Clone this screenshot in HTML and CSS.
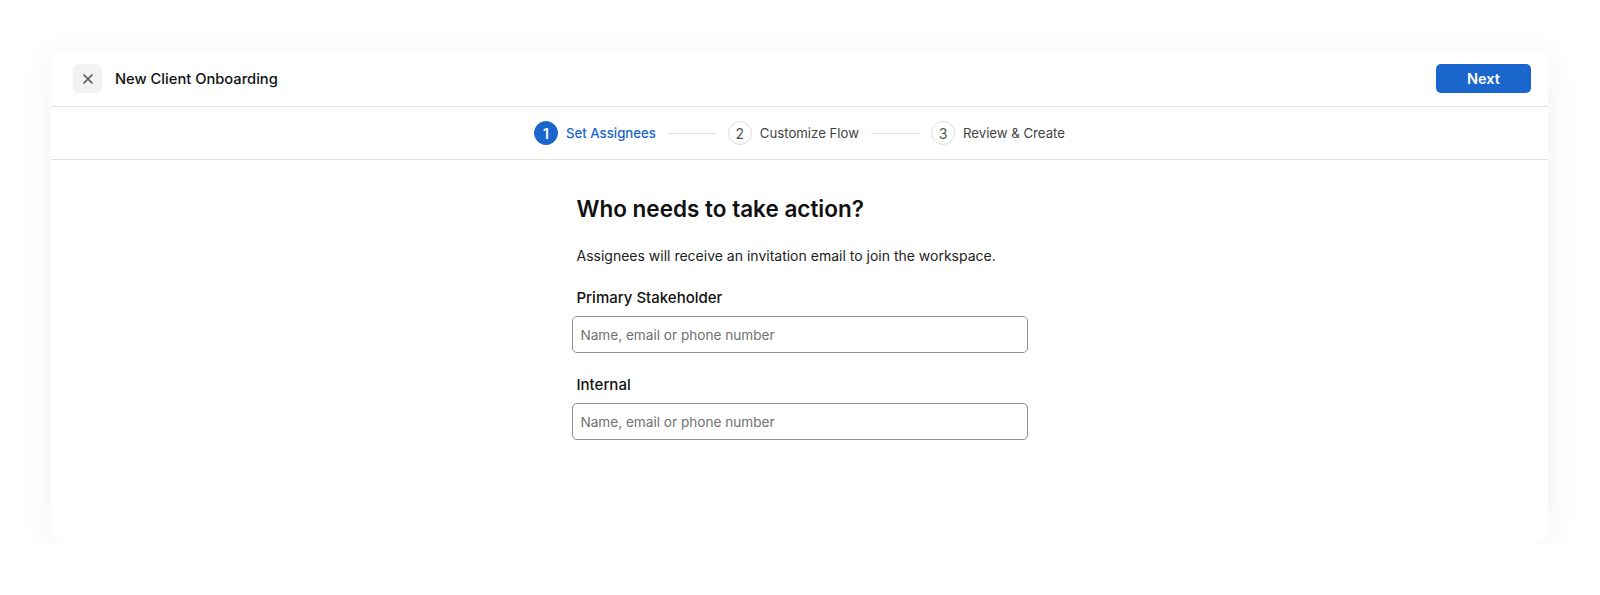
FILE: index.html
```html
<!DOCTYPE html>
<html lang="en">
<head>
    <meta charset="UTF-8">
    <meta name="viewport" content="width=device-width, initial-scale=1.0">
    <title>New Client Onboarding</title>
    <link rel="stylesheet" href="styles.css">
</head>
<body>
    <div class="card">
        <header class="topbar">
            <div class="topbar-left">
                <button class="close-btn" aria-label="Close">
                    <svg width="12" height="12" viewBox="0 0 12 12">
                        <path d="M2 2 L10 10 M10 2 L2 10" stroke="#555" stroke-width="1.6" stroke-linecap="round"/>
                    </svg>
                </button>
                <span class="title">New Client Onboarding</span>
            </div>
            <button class="next-btn">Next</button>
        </header>

        <nav class="stepper">
            <div class="step active">
                <span class="step-num">1</span>
                <span class="step-label">Set Assignees</span>
            </div>
            <span class="step-line"></span>
            <div class="step">
                <span class="step-num">2</span>
                <span class="step-label">Customize Flow</span>
            </div>
            <span class="step-line"></span>
            <div class="step">
                <span class="step-num">3</span>
                <span class="step-label">Review &amp; Create</span>
            </div>
        </nav>

        <main class="content">
            <h1>Who needs to take action?</h1>
            <p class="intro">Assignees will receive an invitation email to join the workspace.</p>

            <div class="field">
                <label for="primary">Primary Stakeholder</label>
                <input type="text" id="primary" placeholder="Name, email or phone number">
            </div>

            <div class="field">
                <label for="internal">Internal</label>
                <input type="text" id="internal" placeholder="Name, email or phone number">
            </div>
        </main>
    </div>
</body>
</html>
```

FILE: styles.css
```css
body {
    font-family: Inter, 'Liberation Sans', sans-serif;
    margin: 0;
    padding: 51px 52px 0 51px;
    background: #fff;
    color: #111;
}
.card {
    height: 493px;
    background: #fff;
    border-radius: 14px;
    box-shadow: 0 4px 36px rgba(0, 0, 0, 0.06);
    display: flex;
    flex-direction: column;
}
.topbar {
    height: 55px;
    display: flex;
    align-items: center;
    justify-content: space-between;
    padding: 0 17px 0 22px;
    border-bottom: 1px solid #e2e2e2;
}
.topbar-left {
    display: flex;
    align-items: center;
    gap: 13px;
}
.close-btn {
    width: 29px;
    height: 29px;
    border: none;
    border-radius: 6px;
    background: #f2f2f2;
    display: flex;
    align-items: center;
    justify-content: center;
    padding: 0;
}
.title {
    font-size: 14.7px;
    font-weight: 500;
    color: #111;
}
.next-btn {
    width: 95px;
    height: 29px;
    border: none;
    border-radius: 5px;
    background: #1a66cc;
    color: #fff;
    font-family: inherit;
    font-size: 14.5px;
    font-weight: 600;
}
.stepper {
    height: 52px;
    display: flex;
    align-items: center;
    justify-content: center;
    gap: 12px;
    border-bottom: 1px solid #e2e2e2;
}
.step {
    display: flex;
    align-items: center;
    gap: 8px;
    font-size: 13.2px;
    color: #444;
}
.step-num {
    width: 22px;
    height: 22px;
    border: 1px solid #dcdcdc;
    border-radius: 50%;
    display: flex;
    align-items: center;
    justify-content: center;
    font-size: 14px;
    color: #555;
}
.step.active .step-num {
    background: #1a66cc;
    border-color: #1a66cc;
    color: #fff;
    font-weight: 600;
}
.step.active .step-label {
    color: #1a66cc;
    font-weight: 500;
}
.step-line {
    width: 48px;
    height: 1px;
    background: #dedede;
}
.content {
    width: 456px;
    margin: 0 auto;
    padding-top: 35px;
}
h1 {
    font-size: 22.5px;
    line-height: 27px;
    font-weight: 600;
    margin: 0 0 24px;
    padding-left: 5px;
    color: #111;
}
.intro {
    font-size: 14px;
    line-height: 20px;
    margin: 0 0 22px;
    padding-left: 5px;
    color: #222;
}
.field {
    margin-bottom: 22px;
}
label {
    display: block;
    font-size: 15px;
    line-height: 20px;
    font-weight: 500;
    margin-bottom: 8px;
    padding-left: 5px;
    color: #111;
}
input {
    width: 100%;
    height: 37px;
    box-sizing: border-box;
    border: 1px solid #8e8e8e;
    border-radius: 5px;
    padding: 0 8px;
    font-family: inherit;
    font-size: 13.6px;
    color: #111;
}
input::placeholder {
    color: #717171;
}
```
